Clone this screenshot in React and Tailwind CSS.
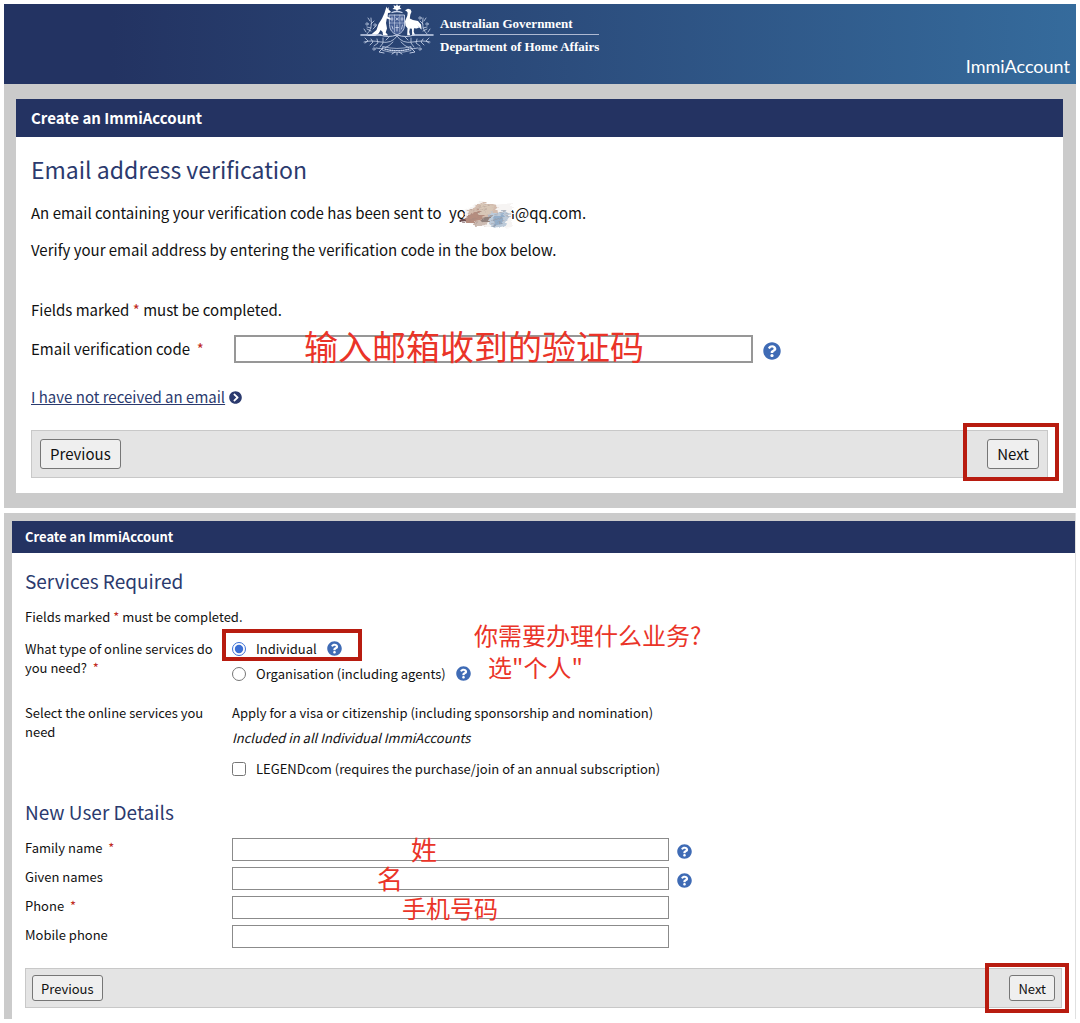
import { FaChevronCircleRight, FaQuestionCircle } from "react-icons/fa";

const Crest = () => (
  <svg viewBox="0 0 74 52" className="w-[74px] h-[52px] shrink-0" fill="none" stroke="#c9d4ea" strokeLinecap="round" aria-hidden="true">
    {/* star and wreath */}
    <path d="M37 0l1 2 2.500-.8-.7 2.300 1.700 1.500-3 .6-1.500 1.400-1.500-1.400-3-.6 1.700-1.500-.7-2.300 2.500.8z" fill="#fff" stroke="none" />
    <path d="M32 8.500q5-2 10 0" strokeWidth="1.300" />
    {/* shield */}
    <path d="M29.500 11h15v10q0 7-7.500 10-7.500-3-7.500-10z" strokeWidth=".9" fill="#475f94" />
    <path d="M29.500 19h15M34.500 11v17M39.800 11v17" strokeWidth=".6" />
    <path d="M32 13v4M31 15h2M36 14l2.500 2M38.500 14l-2.500 2M42 13v4M41 15h2M32 22l1 3M37 21v6M35.800 23.500h2.600M42.500 21l-1 4" strokeWidth=".9" />
    {/* kangaroo */}
    <path d="M26.500 2.500l.8 2.300 1.200-1.800.2 2.700 2.100 1.800-.5 1.300-2.300.2-.4 3.500 3.300 2.200-.4 1-3.700-1.300-.8 4.700 1 5.300-1.300 4 2 2.300v.8h-4.700l-.4-3.500-2-2-2 3.500-3.500 2.500H6l5.500-1.800 5-4.200 2-6 3.500-5.500 2.500-5.500z" fill="#fff" stroke="none" />
    {/* emu */}
    <path d="M45 6.200l3-1.400 2.600.7.900 2.300-1.200 3-.5 3.700 3.200 1.500 5 1 3 3.500.7 5-2-2.300-3 1.300-2.700-.3-.3 3.500 1.500 3.500h-3l-.3-6.500-2-.3-.7 3.500 1 3.300h-3l.3-7-2-2.500-.5-4.500 2.300-5.500.4-3-.8-1.200z" fill="#fff" stroke="none" />
    {/* wattle */}
    <path d="M1 31h20M53 31h20" strokeWidth="1.600" />
    <path d="M20 31q8 3 17 0 9 3 17 0" strokeWidth="1" />
    <path d="M37 32q-5 8-16 6T4 38M37 32q5 8 16 6t17 0M33 38q-8 9-17 6M41 38q8 9 17 6" strokeWidth=".8" />
    <path d="M7 30q6-5 4-16M67 30q-6-5-4-16M11 24l-4-1M11 20l3-3M11 27l-4-2M13 25l3-3M63 24l4-1M63 20l-3-3M63 27l4-2M61 25l-3-3M10 17l-2-3M64 17l2-3M6 28l-2-3M68 28l2-3" strokeWidth=".8" />
    <path d="M5 34l3 3-3 2M11 35l2 3-3 3M17 35l1 4-4 3M23 34l0 5-3 4M69 34l-3 3 3 2M63 35l-2 3 3 3M57 35l-1 4 4 3M51 34l0 5 3 4M29 33l-3 3M45 33l3 3" strokeWidth=".8" />
    <circle cx="15" cy="21" r="1.200" strokeWidth=".7" />
    <circle cx="7" cy="20" r="1.200" strokeWidth=".7" />
    <circle cx="60" cy="14" r="1.200" strokeWidth=".7" />
    <circle cx="67" cy="20" r="1.200" strokeWidth=".7" />
    <circle cx="14" cy="45" r="1.200" strokeWidth=".7" />
    <circle cx="60" cy="45" r="1.200" strokeWidth=".7" />
    {/* scroll */}
    <path d="M23 42.500q14 4 28 0v4q-14 4-28 0z" strokeWidth=".7" />
    <path d="M25 45.200q12 3 24 0" strokeWidth="1.300" strokeDasharray="1 1.300" />
    <path d="M23 44l-4 4 5 1M51 44l4 4-5 1M32 50l3-2M42 50l-3-2M37 49v2" strokeWidth=".9" />
  </svg>
);

const Smudge = () => (
  <svg viewBox="0 0 64 32" className="absolute left-0.5 -top-0.5 w-16 h-8" aria-hidden="true">
    <defs>
      <filter id="smudge" x="-10%" y="-10%" width="120%" height="120%">
        <feTurbulence type="fractalNoise" baseFrequency=".08 .5" numOctaves="2" seed="4" />
        <feDisplacementMap in="SourceGraphic" scale="7" xChannelSelector="R" yChannelSelector="G" />
        <feGaussianBlur stdDeviation=".7" />
      </filter>
    </defs>
    <g filter="url(#smudge)">
      <path d="M14 10l16-8 12 4 19-2v23l-16 2-16-1-16-4z" fill="#f6f4f3" />
      <path d="M17 12l15-9 13 3 1 8-9 6-14 6-8-4z" fill="#d3bcae" />
      <path d="M15 18l12-7 8 5-9 9-12-1z" fill="#b58d7f" />
      <path d="M30 5l14 2-4 7-12 3z" fill="#d8c7b7" />
      <path d="M38 14l17-3 4 6-6 10-10 3-7-9z" fill="#bccad9" />
      <path d="M42 17l11-2-2 10-8 2z" fill="#93adc8" />
      <path d="M24 22l15-4-4 9-11 1z" fill="#cdbcb3" />
      <path d="M30 20l10-3-4 6-8 2z" fill="#8f807b" />
      <path d="M20 12l18-6M17 17l19-7M15 23l20-8M22 26l15-6M41 16l14-4M40 24l17-8M42 27l13-7" stroke="#9a8883" strokeWidth=".6" opacity=".6" />
      <path d="M8 20l8 1-4 3z" fill="#6d4d50" />
    </g>
  </svg>
);

const Required = () => <span className="text-[#c02b1d]">*</span>;

const Help = ({ about, large }) => (
  <button type="button" aria-label={`Help: ${about}`} className="shrink-0 rounded-full text-[#3f6bb5]">
    <FaQuestionCircle className={large ? "w-[18px] h-[18px]" : "w-[15px] h-[15px]"} />
  </button>
);

const Note = ({ className, children }) => (
  <span className={`absolute leading-none whitespace-nowrap text-[#ea3428] pointer-events-none ${className}`}>{children}</span>
);

const Frame = ({ className }) => (
  <span className={`absolute border-4 border-[#b81c10] pointer-events-none ${className}`} />
);

const fields = [
  { id: "family", label: "Family name", required: true, help: true, note: "姓", pos: "left-[179px] -top-0.5 text-[26px]" },
  { id: "given", label: "Given names", help: true, note: "名", pos: "left-[145px] -top-0.5 text-[26px]" },
  { id: "phone", label: "Phone", required: true, note: "手机号码", pos: "left-[170px] top-0 text-2xl" },
  { id: "mobile", label: "Mobile phone" },
];

const Verification = () => (
  <section className="bg-[#cbcbcb] pl-3 pr-[13px] py-[15px]">
    <div className="bg-white">
      <h1 className="bg-[#243362] text-white font-bold text-[15px] leading-[38px] px-[15px]">Create an ImmiAccount</h1>
      <form className="px-[15px] pt-3.5 pb-[15px] text-[15px] leading-6" onSubmit={(e) => e.preventDefault()}>
        <h2 className="text-[23px] leading-9 text-[#2b3a6e]">Email address verification</h2>
        <p className="mt-3.5">
          An email containing your verification code has been sent to{" "}
          <span className="relative inline-block w-[66px] h-6 ml-1 align-bottom">
            <span className="flex justify-between"><span>yo</span><span>n</span></span>
            <Smudge />
          </span>
          @qq.com.
        </p>
        <p className="mt-[13px]">Verify your email address by entering the verification code in the box below.</p>
        <p className="mt-9">Fields marked <Required /> must be completed.</p>
        <div className="flex items-center mt-[13px]">
          <label htmlFor="code" className="w-[203px]">Email verification code &nbsp;<Required /></label>
          <div className="relative w-[519px]">
            <input id="code" type="text" className="block w-full h-7 px-2 bg-white border-2 border-[#979797]" />
            <Note className="left-[70px] -top-1.5 text-[34px]">输入邮箱收到的验证码</Note>
          </div>
          <span className="flex ml-2.5 pt-1"><Help about="email verification code" large /></span>
        </div>
        <div className="flex items-center gap-1 mt-[22px] text-[#2b3a6e]">
          <a href="#resend" className="underline">I have not received an email</a>
          <FaChevronCircleRight className="w-[13px] h-[13px]" />
        </div>
        <div className="flex items-center justify-between h-12 mt-[21px] px-2 bg-[#e4e4e4] border border-[#c8c8c8]">
          <button type="button" className="h-[30px] px-[9px] bg-[#efefef] border border-[#767676] rounded-[3px]">Previous</button>
          <div className="relative">
            <button type="submit" className="block h-[30px] px-[9px] bg-[#efefef] border border-[#767676] rounded-[3px]">Next</button>
            <Frame className="-left-6 -right-5 -top-4 -bottom-3" />
          </div>
        </div>
      </form>
    </div>
  </section>
);

const Services = () => (
  <section className="mt-[5px] bg-[#cbcbcb] pl-2 pt-2 border-r border-[#e0e0e0]">
    <div className="bg-white">
      <h1 className="bg-[#243362] text-white font-bold text-[13px] leading-8 px-[13px]">Create an ImmiAccount</h1>
      <form className="px-[13px] pt-3 pb-[11px] text-[13px] leading-[19px]" onSubmit={(e) => e.preventDefault()}>
        <h2 className="text-[19px] leading-8 text-[#2b3a6e]">Services Required</h2>
        <p className="mt-2.5">Fields marked <Required /> must be completed.</p>
        <fieldset className="relative flex mt-[13px]">
          <legend className="float-left w-[207px] pr-4">What type of online services do you need? &nbsp;<Required /></legend>
          <div className="flex flex-col gap-1.5">
            <div className="relative flex items-center">
              <input id="individual" name="service" type="radio" defaultChecked className="w-3.5 h-3.5 mr-2.5 accent-[#3b6fd4]" />
              <label htmlFor="individual" className="mr-2.5">Individual</label>
              <Help about="individual" />
              <Frame className="-left-2.5 -top-2.5 w-[140px] h-8" />
            </div>
            <div className="flex items-center">
              <input id="organisation" name="service" type="radio" className="w-3.5 h-3.5 mr-2.5 accent-[#3b6fd4]" />
              <label htmlFor="organisation" className="mr-2.5">Organisation (including agents)</label>
              <Help about="organisation" />
            </div>
          </div>
          <Note className="left-[449px] -top-4 text-2xl">你需要办理什么业务?</Note>
          <Note className="left-[463px] top-4 text-2xl">选"个人"</Note>
        </fieldset>
        <div className="flex mt-5">
          <p className="w-[207px] pr-4">Select the online services you need</p>
          <div>
            <p>Apply for a visa or citizenship (including sponsorship and nomination)</p>
            <p className="mt-1.5 italic">Included in all Individual ImmiAccounts</p>
            <div className="flex items-center mt-3">
              <input id="legend" type="checkbox" className="w-3.5 h-3.5 mr-2.5" />
              <label htmlFor="legend">LEGENDcom (requires the purchase/join of an annual subscription)</label>
            </div>
          </div>
        </div>
        <h2 className="mt-[18px] text-[19px] leading-8 text-[#2b3a6e]">New User Details</h2>
        <div className="flex flex-col gap-1.5 mt-2.5">
          {fields.map((f) => (
            <div key={f.id} className="flex items-center">
              <label htmlFor={f.id} className="w-[207px] pb-1">{f.label}{f.required && <> &nbsp;<Required /></>}</label>
              <div className="relative w-[437px]">
                <input id={f.id} type="text" className="block w-full h-[23px] px-2 bg-white border border-[#8b8b8b]" />
                {f.note && <Note className={f.pos}>{f.note}</Note>}
              </div>
              {f.help && <span className="flex ml-2 pt-1"><Help about={f.label} /></span>}
            </div>
          ))}
        </div>
        <div className="flex items-center justify-between h-10 mt-5 px-1.5 bg-[#e4e4e4] border border-[#c8c8c8]">
          <button type="button" className="h-[26px] px-2 bg-[#efefef] border border-[#767676] rounded-[3px]">Previous</button>
          <div className="relative">
            <button type="submit" className="block h-[26px] px-2 bg-[#efefef] border border-[#767676] rounded-[3px]">Next</button>
            <Frame className="-left-6 -right-3.5 -top-3 -bottom-3" />
          </div>
        </div>
      </form>
    </div>
  </section>
);

export default function App() {
  return (
    <main className="bg-white p-1 text-[#111] font-['Noto_Sans_CJK_SC',sans-serif]">
      <header className="relative h-20 bg-linear-to-r from-[#233362] from-10% to-[#356b9c]">
        <div className="flex gap-1.5 ml-[356px]">
          <Crest />
          <div className="pt-2.5 font-['Liberation_Serif',serif] font-bold text-[13px] text-white">
            <p className="leading-5 border-b border-[#aeb9d2]">Australian Government</p>
            <p className="leading-6">Department of Home Affairs</p>
          </div>
        </div>
        <p className="absolute right-1.5 bottom-1.5 text-lg leading-6 text-white font-[Lato,sans-serif]">ImmiAccount</p>
      </header>
      <Verification />
      <Services />
    </main>
  );
}
